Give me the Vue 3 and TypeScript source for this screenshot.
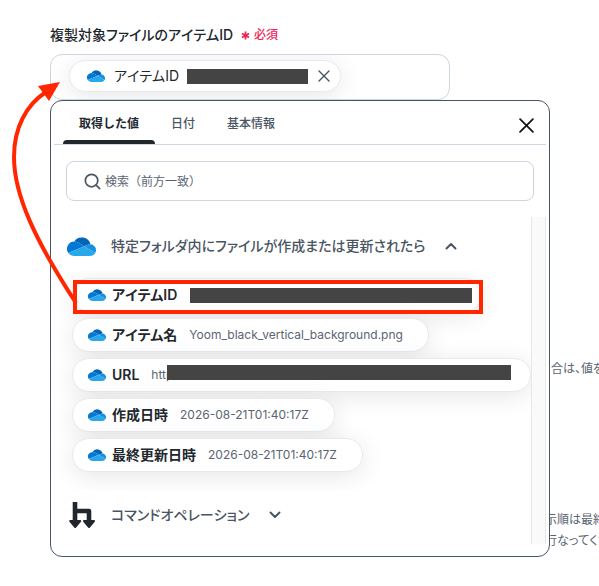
<script setup lang="ts">
import { ref } from 'vue'

interface Item {
  label: string
  value: string
  mask: '' | 'inline' | 'over'
}

const tabs = ['取得した値', '日付', '基本情報']
const activeTab = ref(0)
const open = ref(true)
const keyword = ref('')

const items: Item[] = [
  { label: 'アイテムID', value: '', mask: 'inline' },
  { label: 'アイテム名', value: 'Yoom_black_vertical_background.png', mask: '' },
  { label: 'URL', value: 'http', mask: 'over' },
  { label: '作成日時', value: '2026-08-21T01:40:17Z', mask: '' },
  { label: '最終更新日時', value: '2026-08-21T01:40:17Z', mask: '' },
]
</script>

<template>
  <main class="page">
    <svg class="defs" aria-hidden="true">
      <symbol id="cloud" viewBox="0 5 32 21">
        <path fill="#0364b8" d="M12.2 11.19l6.72 4.03 4-1.69A6.48 6.48 0 0 1 25.5 13c.15 0 .29.01.44.02A10 10 0 0 0 7.9 10H8a7.96 7.96 0 0 1 4.2 1.19Z" />
        <path fill="#0078d4" d="M12.2 11.19A7.96 7.96 0 0 0 8 10h-.1a8 8 0 0 0-6.46 12.57l5.92-2.49 2.63-1.11 5.87-2.47 3.06-1.28Z" />
        <path fill="#1490df" d="M25.94 13.02A6.5 6.5 0 0 0 22.92 13.53l-4 1.69 1.16.69 3.81 2.28 1.66.99 5.67 3.4a6.5 6.5 0 0 0-5.28-9.56Z" />
        <path fill="#28a8ea" d="M25.55 19.18l-1.66-.99-3.81-2.28-1.16-.69-3.06 1.28-5.87 2.47-2.63 1.11-5.92 2.49A7.99 7.99 0 0 0 8 26h17.5a6.5 6.5 0 0 0 5.72-3.42Z" />
      </symbol>
    </svg>

    <div class="label">
      <span>複製対象ファイルのアイテムID</span>
      <span class="required"><svg class="star" viewBox="0 0 10 10" aria-hidden="true"><path d="M5 .5v9M1.1 2.75l7.8 4.5M8.9 2.75l-7.8 4.5" /></svg>必須</span>
    </div>

    <div class="field">
      <div class="token">
        <svg class="cloud" aria-hidden="true"><use href="#cloud" /></svg>
        <span>アイテムID</span>
        <span class="mask"></span>
        <button type="button" class="icon-button" aria-label="削除">
          <svg class="remove" viewBox="0 0 12 12"><path d="M1 1l10 10M11 1L1 11" /></svg>
        </button>
      </div>
    </div>

    <div class="body">
      <section class="panel">
        <header class="tabs">
          <button
            v-for="(tab, i) in tabs"
            :key="tab"
            type="button"
            class="tab"
            :class="{ active: i === activeTab }"
            @click="activeTab = i"
          >{{ tab }}</button>
          <button type="button" class="icon-button close" aria-label="閉じる">
            <svg viewBox="0 0 14 14"><path d="M1 1l12 12M13 1L1 13" /></svg>
          </button>
        </header>

        <label class="search">
          <svg viewBox="0 0 18 18" aria-hidden="true"><circle cx="8" cy="8" r="6.6" /><path d="M12.8 12.8l3.8 3.8" /></svg>
          <input v-model="keyword" type="text" placeholder="検索（前方一致）" aria-label="検索" />
        </label>

        <div class="scroll">
          <div class="content">
            <button type="button" class="group" :aria-expanded="open" @click="open = !open">
              <svg class="group-icon" aria-hidden="true"><use href="#cloud" /></svg>
              <span>特定フォルダ内にファイルが作成または更新されたら</span>
              <svg class="chevron" viewBox="0 0 12 8" aria-hidden="true"><path d="M1.5 6.5L6 2l4.5 4.5" /></svg>
            </button>
            <ul v-if="open" class="items">
              <li v-for="item in items" :key="item.label">
                <button type="button" class="item" :class="{ wide: item.mask === 'over' }">
                  <svg class="cloud" aria-hidden="true"><use href="#cloud" /></svg>
                  <span class="name">{{ item.label }}</span>
                  <span v-if="item.mask === 'inline'" class="mask long"></span>
                  <span v-else class="value">{{ item.value }}<span v-if="item.mask === 'over'" class="mask cover"></span></span>
                </button>
              </li>
            </ul>
            <button type="button" class="group">
              <svg class="group-icon command" viewBox="0 0 28 28" aria-hidden="true">
                <path d="M6 1v20M6 10h14v11" fill="none" stroke="#22272e" stroke-width="4.6" stroke-linejoin="round" />
                <path d="M1.2 20h10L6.2 26ZM15 20h10l-5 6Z" fill="#22272e" stroke="#22272e" stroke-width="2" stroke-linejoin="round" />
              </svg>
              <span>コマンドオペレーション</span>
              <svg class="chevron" viewBox="0 0 12 8" aria-hidden="true"><path d="M1.5 1.5L6 6l4.5-4.5" /></svg>
            </button>
          </div>
          <div class="track"></div>
        </div>
      </section>

      <aside class="hints">
        <p class="indent">合は、値を</p>
        <p>示順は最終<br />行なってくだ</p>
      </aside>
    </div>

    <svg class="annotation" viewBox="0 0 490 330" aria-hidden="true">
      <rect x="75" y="282" width="406" height="30" />
      <path d="M76 303C35 240 14 195 14 157C14 128 26 105 46 92" />
      <polygon points="60,82 38,86 49,101" />
    </svg>
  </main>
</template>

<style>
body {
  background: #fff;
}
</style>

<style scoped>
.page {
  position: relative;
  overflow: hidden;
  padding: 25px 0 29px 50px;
  font-family: Inter, "Noto Sans CJK JP", sans-serif;
  font-feature-settings: "palt";
  font-kerning: none;
  font-size: 14px;
  line-height: 20px;
  color: #22272e;
}
.defs {
  position: absolute;
  width: 0;
  height: 0;
}
button,
input {
  font: inherit;
  font-feature-settings: inherit;
  font-kerning: inherit;
  color: inherit;
  background: none;
  border: 0;
  padding: 0;
  margin: 0;
}
button {
  cursor: pointer;
}
.label {
  display: flex;
  gap: 8px;
  font-weight: 500;
  white-space: nowrap;
}
.required {
  display: flex;
  align-items: center;
  gap: 4px;
  font-size: 12px;
  color: #f02455;
}
.star {
  width: 9px;
  height: 9px;
  stroke: currentColor;
  stroke-width: 2;
}
.field {
  box-sizing: border-box;
  max-width: 400px;
  margin-top: 9px;
  padding: 5px 18px 7px;
  overflow: hidden;
  border: 1px solid #cdd5df;
  border-radius: 12px;
}
.token {
  display: inline-flex;
  align-items: center;
  box-sizing: border-box;
  height: 32px;
  padding: 0 10px 0 17px;
  background: #fff;
  border: 1px solid #e8eaf0;
  border-radius: 16px;
  box-shadow: 0 4px 24px rgba(0, 0, 0, 0.1);
  vertical-align: top;
  white-space: nowrap;
}
.cloud {
  flex: none;
  width: 18px;
  height: 12px;
  margin-right: 9px;
}
.mask {
  width: 121px;
  height: 15px;
  margin-left: 8px;
  background: #444;
}
.icon-button {
  display: flex;
}
.icon-button path {
  fill: none;
  stroke: #4a5560;
  stroke-width: 1.4;
  stroke-linecap: round;
}
.remove {
  width: 12px;
  height: 12px;
  margin-left: 10px;
}
.body {
  display: grid;
  grid-template-columns: minmax(0, 500px) minmax(0, 1fr);
}
.panel {
  position: relative;
  z-index: 1;
  padding: 0 3px 12px;
  background: #fff;
  border: 1px solid #4a5563;
  border-radius: 12px;
}
.tabs {
  display: flex;
  align-items: stretch;
  height: 43px;
  padding: 0 12px 0 9px;
  border-bottom: 1px solid #cdd5df;
}
.tab {
  padding: 7px 16px 0;
  border-bottom: 4px solid transparent;
  font-size: 12px;
  font-weight: 500;
  font-feature-settings: normal;
  color: #4a5563;
}
.tab.active {
  position: relative;
  font-weight: 700;
  color: #22272e;
}
.tab.active::after {
  content: "";
  position: absolute;
  inset: auto 0 -4px;
  height: 4px;
  background: #22272e;
  border-radius: 4px 4px 0 0;
}
.close {
  align-items: center;
  margin-left: auto;
  padding-top: 5px;
}
.close svg {
  width: 15px;
  height: 15px;
}
.close path {
  stroke: #111;
  stroke-width: 1.6;
}
.search {
  display: flex;
  align-items: center;
  gap: 4px;
  box-sizing: border-box;
  height: 40px;
  margin: 16px 12px;
  padding: 0 17px;
  border: 1px solid #cdd5df;
  border-radius: 8px;
}
.search svg {
  flex: none;
  width: 17px;
  height: 17px;
  fill: none;
  stroke: #4a5563;
  stroke-width: 1.8;
  stroke-linecap: round;
}
.search input {
  flex: 1;
  min-width: 0;
  padding-top: 2px;
  font-size: 12px;
  font-feature-settings: normal;
  outline: 0;
}
.search input::placeholder {
  color: #5a6472;
  opacity: 1;
}
.scroll {
  display: flex;
}
.content {
  flex: 1;
  min-width: 0;
  padding: 4px 0;
}
.track {
  box-sizing: border-box;
  width: 15px;
  background: #fafafa;
  border: solid #e8e8e8;
  border-width: 0 1px;
}
.group {
  display: flex;
  align-items: center;
  width: 100%;
  height: 50px;
  padding-left: 13px;
  font-weight: 500;
  color: #4a5563;
  white-space: nowrap;
}
.group-icon {
  width: 29px;
  height: 19px;
  margin-right: 15px;
}
.group-icon.command {
  width: 28px;
  height: 28px;
  margin: 0 14px 0 2px;
}
.chevron {
  width: 12px;
  height: 8px;
  margin-left: 20px;
  fill: none;
  stroke: currentColor;
  stroke-width: 2;
  stroke-linecap: round;
  stroke-linejoin: round;
}
.items {
  display: grid;
  gap: 6px;
  margin: 0;
  padding: 7px 0 18px 18px;
  overflow: hidden;
  list-style: none;
}
.items li {
  display: flex;
}
.item {
  display: flex;
  align-items: center;
  box-sizing: border-box;
  height: 34px;
  padding: 0 25px 0 15px;
  background: #fff;
  border: 1px solid #e8eaf0;
  border-radius: 17px;
  box-shadow: 0 4px 24px rgba(0, 0, 0, 0.1);
  white-space: nowrap;
}
.item.wide {
  width: 100%;
}
.item .cloud {
  margin-right: 6px;
}
.name {
  font-weight: 600;
}
.mask.long {
  width: 282px;
  margin: 0 -16px 0 13px;
}
.value {
  position: relative;
  margin-left: 12px;
  font-size: 12px;
  font-kerning: normal;
  color: #5a6472;
}
.item.wide .value {
  flex: 1;
  text-align: left;
}
.mask.cover {
  position: absolute;
  inset: 0 -6px auto 8px;
  width: auto;
}
.hints {
  padding-top: 258px;
  margin-left: -5px;
  font-size: 12px;
  line-height: 21px;
  color: #5a6472;
  white-space: nowrap;
}
.hints p {
  margin: 0 0 130px;
}
.hints p:last-child {
  margin: 0;
}
.indent {
  padding-left: 6px;
}
.annotation {
  position: absolute;
  top: 0;
  left: 0;
  width: 490px;
  height: 330px;
  z-index: 2;
  pointer-events: none;
}
.annotation rect,
.annotation path {
  fill: none;
  stroke: #ff2600;
  stroke-width: 4;
}
.annotation polygon {
  fill: #ff2600;
}
</style>
